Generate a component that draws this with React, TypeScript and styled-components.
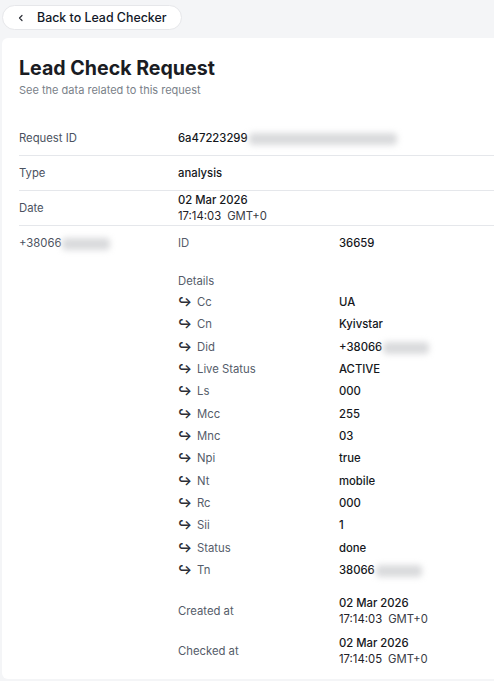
import React from 'react';
import styled, { createGlobalStyle } from 'styled-components';

const GlobalStyle = createGlobalStyle`
  html, body {
    margin: 0;
    padding: 0;
    background: #f4f5f7;
    overflow: hidden;
  }
  body {
    font-family: Inter, "Noto Sans", "Liberation Sans", sans-serif;
    color: #111827;
  }
`;

const Page = styled.div`
  display: flex;
  flex-direction: column;
  padding: 5px 0 0 2px;
`;

const BackButton = styled.button`
  display: flex;
  align-items: center;
  gap: 12px;
  width: 180px;
  height: 25px;
  padding: 0 0 0 14px;
  background: #ffffff;
  border: 1px solid #e6e7ea;
  border-radius: 13px;
  font-family: inherit;
  font-size: 12.4px;
  font-weight: 500;
  color: #111827;
  cursor: pointer;
`;

const Card = styled.div`
  margin-top: 8px;
  width: 540px;
  background: #ffffff;
  border-radius: 6px;
  padding: 17px 0 8px 17px;
  box-sizing: border-box;
`;

const Title = styled.h1`
  margin: 0;
  font-size: 19.6px;
  line-height: 26px;
  font-weight: 700;
  color: #1a1c23;
`;

const Subtitle = styled.p`
  margin: 1px 0 0;
  font-size: 11px;
  line-height: 16px;
  color: #7a7f89;
`;

const Table = styled.div`
  margin-top: 23px;
  display: flex;
  flex-direction: column;
`;

const Row = styled.div<{ $top?: boolean }>`
  display: grid;
  grid-template-columns: 159px 1fr;
  align-items: ${p => (p.$top ? 'start' : 'center')};
  min-height: 34px;
  padding: ${p => (p.$top ? '9px 0 0' : '0')};
  border-bottom: 1px solid #e5e7eb;

  &:last-child {
    border-bottom: none;
  }
`;

const Label = styled.div`
  font-size: 11.3px;
  line-height: 16px;
  color: #4b5260;
`;

const Value = styled.div`
  font-size: 11.3px;
  line-height: 16px;
  font-weight: 500;
  color: #15171c;
`;

const Time = styled.span`
  font-weight: 400;
  color: #1f2128;
`;

const Zone = styled.span`
  font-weight: 400;
  margin-left: 6px;
  color: #3a3d46;
`;

const Blur = styled.span<{ $w: number }>`
  display: inline-block;
  vertical-align: middle;
  width: ${p => p.$w}px;
  height: 12px;
  margin-left: 1px;
  background: #d9dadc;
  border-radius: 4px;
  filter: blur(3px);
`;

const Nested = styled.div`
  display: flex;
  flex-direction: column;
  margin-top: -9px;
`;

const SubRow = styled.div<{ $h: number; $gap?: number }>`
  display: grid;
  grid-template-columns: 161px 1fr;
  align-items: center;
  height: ${p => p.$h}px;
  margin-top: ${p => p.$gap ?? 0}px;
`;

const SubLabel = styled.div`
  display: flex;
  align-items: center;
  font-size: 11.3px;
  line-height: 16px;
  color: #555c69;
`;

const Arrow = styled.span`
  width: 19px;
  font-size: 12px;
  font-weight: 700;
  color: #2b2e36;
`;

const DateValue: React.FC<{ date: string; time: string }> = ({ date, time }) => (
  <Value>
    <div>{date}</div>
    <div>
      <Time>{time}</Time>
      <Zone>GMT+0</Zone>
    </div>
  </Value>
);

const details: [string, React.ReactNode][] = [
  ['Cc', 'UA'],
  ['Cn', 'Kyivstar'],
  ['Did', <>+38066<Blur $w={46} /></>],
  ['Live Status', 'ACTIVE'],
  ['Ls', '000'],
  ['Mcc', '255'],
  ['Mnc', '03'],
  ['Npi', 'true'],
  ['Nt', 'mobile'],
  ['Rc', '000'],
  ['Sii', '1'],
  ['Status', 'done'],
  ['Tn', <>38066<Blur $w={46} /></>],
];

const ChevronLeft = () => (
  <svg width="8" height="8" viewBox="0 0 8 8" fill="none">
    <path d="M5 1.5L2.5 4L5 6.5" stroke="#2b2e36" strokeWidth="1.2" strokeLinecap="round" strokeLinejoin="round" />
  </svg>
);

export default function App() {
  return (
    <>
      <GlobalStyle />
      <Page>
        <BackButton>
          <ChevronLeft />
          Back to Lead Checker
        </BackButton>
        <Card>
          <Title>Lead Check Request</Title>
          <Subtitle>See the data related to this request</Subtitle>
          <Table>
            <Row>
              <Label>Request ID</Label>
              <Value>
                6a47223299<Blur $w={148} />
              </Value>
            </Row>
            <Row>
              <Label>Type</Label>
              <Value>analysis</Value>
            </Row>
            <Row>
              <Label>Date</Label>
              <DateValue date="02 Mar 2026" time="17:14:03" />
            </Row>
            <Row $top>
              <Label>
                +38066<Blur $w={48} />
              </Label>
              <Nested>
                <SubRow $h={34}>
                  <SubLabel>ID</SubLabel>
                  <Value>36659</Value>
                </SubRow>
                <SubRow $h={20} $gap={11}>
                  <SubLabel>Details</SubLabel>
                  <div />
                </SubRow>
                {details.map(([k, v]) => (
                  <SubRow key={k} $h={22.33}>
                    <SubLabel>
                      <Arrow>↪</Arrow>
                      {k}
                    </SubLabel>
                    <Value>{v}</Value>
                  </SubRow>
                ))}
                <SubRow $h={40} $gap={10}>
                  <SubLabel>Created at</SubLabel>
                  <DateValue date="02 Mar 2026" time="17:14:03" />
                </SubRow>
                <SubRow $h={40}>
                  <SubLabel>Checked at</SubLabel>
                  <DateValue date="02 Mar 2026" time="17:14:05" />
                </SubRow>
              </Nested>
            </Row>
          </Table>
        </Card>
      </Page>
    </>
  );
}
